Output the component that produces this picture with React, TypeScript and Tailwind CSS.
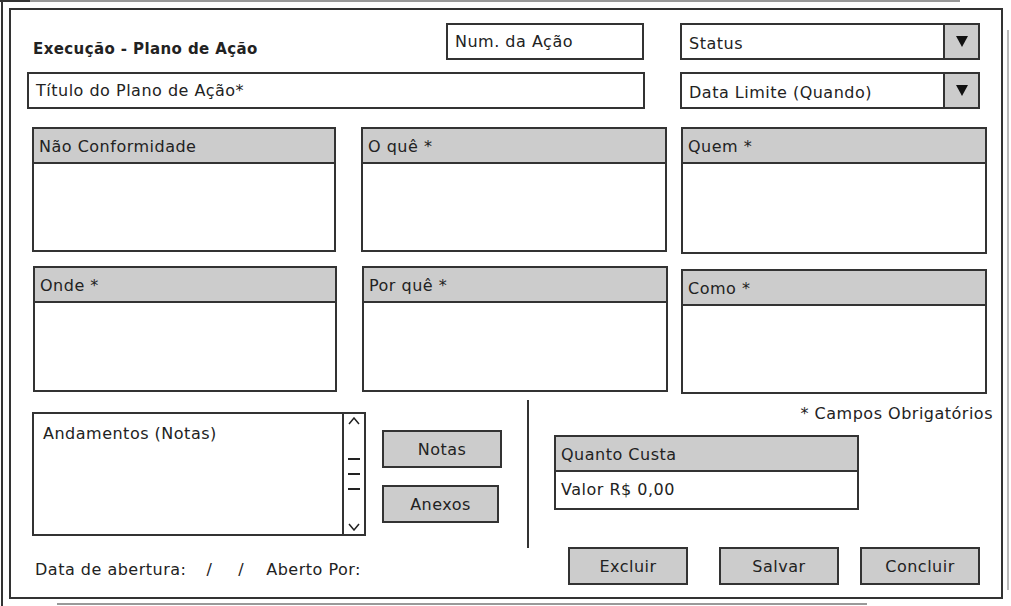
import React from "react";

function Select({ label }: { label: string }) {
  return (
    <div className="flex h-[37px] w-[300px] border-2 border-[#333] bg-white">
      <div className="flex flex-1 items-center pl-[7px] pt-[4px] text-[16px] tracking-[0.5px]">{label}</div>
      <div className="flex w-[35px] items-center justify-center border-l-2 border-[#333] bg-[#cccccc]">
        <svg width="12" height="11" viewBox="0 0 12 11">
          <path d="M0 0 L12 0 L6 11 Z" fill="#111" />
        </svg>
      </div>
    </div>
  );
}

function Panel({ title, w, body }: { title: string; w: string; body: string }) {
  return (
    <div className={`${w} flex flex-col border-2 border-[#333] bg-white`}>
      <div className="flex h-[35px] items-center border-b-2 border-[#333] bg-[#cccccc] pl-[5px] pt-[3px] text-[16px] tracking-[0.5px]">
        {title}
      </div>
      <div className={body} />
    </div>
  );
}

function Btn({ label, w }: { label: string; w: string }) {
  return (
    <div className={`${w} flex h-[38px] items-center justify-center border-2 border-[#333] bg-[#cccccc] pt-[2px] text-[16px] tracking-[0.5px]`}>
      {label}
    </div>
  );
}

export default function App() {
  return (
    <div className="relative h-[606px] w-[1011px] overflow-hidden bg-white pl-[9px] pt-[8px] font-['DejaVu_Sans',sans-serif] text-[#222]">
      {/* sketch frame decorations */}
      <div className="absolute left-[1px] top-0 h-[606px] w-[2px] bg-[#333]" />
      <div className="absolute left-0 top-0 h-[2px] w-[30px] bg-[#333]" />
      <div className="absolute left-[30px] top-0 h-[2px] w-[930px] bg-[#999]" />
      <div className="absolute left-[1007px] top-[30px] h-[560px] w-[2px] bg-[#bbb]" />
      <div className="absolute left-[57px] top-[603px] h-[2px] w-[810px] bg-[#999]" />

      <div className="flex h-[591px] w-[994px] flex-col border-2 border-[#333] bg-white">
        {/* top section */}
        <div className="flex pt-[13px]">
          <div className="ml-[16px] flex w-[618px] flex-col">
            <div className="flex h-[37px] items-center">
              <div className="ml-[6px] mt-[16px] text-[15px] font-bold tracking-[0.4px]">Execução - Plano de Ação</div>
              <div className="ml-auto mr-[1px] flex h-[37px] w-[198px] items-start border-2 border-[#333] pl-[7px] pt-[5px] text-[16px] tracking-[0.5px]">
                Num. da Ação
              </div>
            </div>
            <div className="mt-[12px] flex h-[37px] w-[618px] items-center border-2 border-[#333] pl-[7px] text-[16px] tracking-[0.5px]">
              Título do Plano de Ação*
            </div>
          </div>
          <div className="ml-[35px] flex flex-col gap-[12px]">
            <Select label="Status" />
            <Select label="Data Limite (Quando)" />
          </div>
        </div>

        {/* panels row 1 */}
        <div className="mt-[18px] flex">
          <div className="ml-[21px]">
            <Panel title="Não Conformidade" w="w-[304px]" body="h-[86px]" />
          </div>
          <div className="ml-[25px]">
            <Panel title="O quê *" w="w-[306px]" body="h-[86px]" />
          </div>
          <div className="ml-[14px]">
            <Panel title="Quem *" w="w-[306px]" body="h-[88px]" />
          </div>
        </div>

        {/* panels row 2 */}
        <div className="mt-[12px] flex items-start">
          <div className="ml-[22px]">
            <Panel title="Onde *" w="w-[304px]" body="h-[87px]" />
          </div>
          <div className="ml-[25px]">
            <Panel title="Por quê *" w="w-[306px]" body="h-[87px]" />
          </div>
          <div className="ml-[13px] mt-[3px]">
            <Panel title="Como *" w="w-[306px]" body="h-[86px]" />
          </div>
        </div>

        {/* bottom section */}
        <div className="mt-[6px] flex">
          <div className="flex w-[516px] flex-col">
            <div className="flex">
              <div className="ml-[21px] mt-[12px] flex h-[124px] w-[334px] border-2 border-[#333]">
                <div className="flex-1 pl-[9px] pt-[8px] text-[16px] tracking-[0.5px]">Andamentos (Notas)</div>
                <div className="flex w-[22px] flex-col items-center justify-between border-l-2 border-[#333] py-[3px]">
                  <svg width="12" height="8" viewBox="0 0 12 8">
                    <path d="M1 7 L6 1 L11 7" fill="none" stroke="#222" strokeWidth="1.5" />
                  </svg>
                  <div className="flex flex-col gap-[13px]">
                    <div className="h-[2px] w-[12px] bg-[#222]" />
                    <div className="h-[2px] w-[12px] bg-[#222]" />
                    <div className="h-[2px] w-[12px] bg-[#222]" />
                  </div>
                  <svg width="12" height="8" viewBox="0 0 12 8">
                    <path d="M1 1 L6 7 L11 1" fill="none" stroke="#222" strokeWidth="1.5" />
                  </svg>
                </div>
              </div>
              <div className="ml-[16px] mt-[30px] flex flex-col gap-[17px]">
                <Btn label="Notas" w="w-[120px]" />
                <Btn label="Anexos" w="w-[117px]" />
              </div>
            </div>
            <div className="ml-[24px] mt-[22px] flex text-[16px] tracking-[0.5px]">
              <span>Data de abertura:</span>
              <span className="ml-[20px]">/</span>
              <span className="ml-[26px]">/</span>
              <span className="ml-[22px]">Aberto Por:</span>
            </div>
          </div>
          <div className="flex flex-1 flex-col">
            <div className="h-[148px] border-l-2 border-[#333]">
              <div className="mt-[2px] pr-[8px] text-right text-[16px] tracking-[0.5px]">* Campos Obrigatórios</div>
              <div className="ml-[25px] mt-[9px] w-[305px] border-2 border-[#333]">
                <div className="flex h-[35px] items-center border-b-2 border-[#333] bg-[#cccccc] pl-[5px] pt-[2px] text-[16px] tracking-[0.5px]">
                  Quanto Custa
                </div>
                <div className="flex h-[36px] items-center pl-[5px] text-[16px] tracking-[0.5px]">Valor R$ 0,00</div>
              </div>
            </div>
            <div className="-mt-[1px] flex">
              <div className="ml-[41px]">
                <Btn label="Excluir" w="w-[120px]" />
              </div>
              <div className="ml-[31px]">
                <Btn label="Salvar" w="w-[120px]" />
              </div>
              <div className="ml-[21px]">
                <Btn label="Concluir" w="w-[120px]" />
              </div>
            </div>
          </div>
        </div>
      </div>
    </div>
  );
}
